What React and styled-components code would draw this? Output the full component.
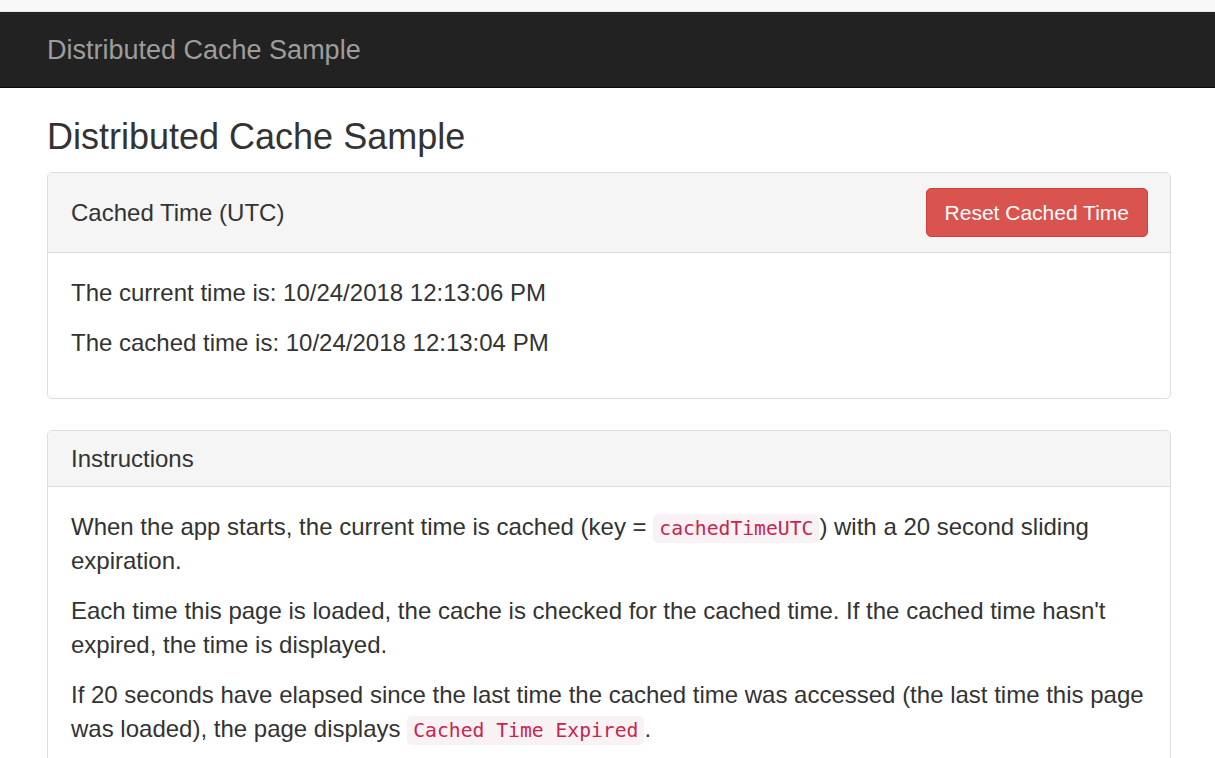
import React from 'react';
import styled, { createGlobalStyle } from 'styled-components';

const GlobalStyle = createGlobalStyle`
  html, body {
    margin: 0;
    padding: 0;
    background: #fff;
  }
  body {
    font-family: "Liberation Sans", Arial, sans-serif;
    color: #333;
  }
`;

const TopStrip = styled.div`
  height: 11px;
  background: #f8f8f8;
  border-bottom: 1px solid #e7e7e7;
`;

const Navbar = styled.nav`
  height: 75px;
  background: #222;
  border-bottom: 1px solid #080808;
  display: flex;
  align-items: center;
  padding-left: 47px;
`;

const Brand = styled.a`
  color: #9d9d9d;
  font-size: 27px;
  text-decoration: none;
  padding-top: 2px;
`;

const Container = styled.main`
  padding: 0 44px 0 47px;
`;

const Title = styled.h1`
  font-size: 36px;
  font-weight: 500;
  line-height: 40px;
  margin: 29px 0 15px;
`;

const Panel = styled.section`
  border: 1px solid #ddd;
  border-radius: 5px;
  margin-bottom: 31px;
  overflow: hidden;
`;

const PanelHeading = styled.div`
  background: #f5f5f5;
  border-bottom: 1px solid #ddd;
  padding: 15px 22px 15px 23px;
  min-height: 25px;
  display: flex;
  align-items: center;
  justify-content: space-between;
  font-size: 24px;
  line-height: 24px;
`;

const PanelBody = styled.div`
  padding: 23px 23px 22px;
  font-size: 24px;
  line-height: 34px;

  p {
    margin: 0 0 16px;
  }
`;

const DangerButton = styled.button`
  font-family: inherit;
  font-size: 21px;
  color: #fff;
  background: #d9534f;
  border: 1px solid #d43f3a;
  border-radius: 5px;
  height: 49px;
  padding: 0 18px;
  cursor: pointer;
`;

const Code = styled.code`
  font-family: "DejaVu Sans Mono", "Liberation Mono", monospace;
  font-size: 19.7px;
  line-height: 16px;
  color: #c7254e;
  background: #f9f2f4;
  border-radius: 5px;
  padding: 3px 6px;
`;

export default function App() {
  return (
    <>
      <GlobalStyle />
      <TopStrip />
      <Navbar>
        <Brand href="#">Distributed Cache Sample</Brand>
      </Navbar>
      <Container>
        <Title>Distributed Cache Sample</Title>

        <Panel>
          <PanelHeading>
            <span>Cached Time (UTC)</span>
            <DangerButton type="button">Reset Cached Time</DangerButton>
          </PanelHeading>
          <PanelBody>
            <p>The current time is: 10/24/2018 12:13:06 PM</p>
            <p>The cached time is: 10/24/2018 12:13:04 PM</p>
          </PanelBody>
        </Panel>

        <Panel>
          <PanelHeading>Instructions</PanelHeading>
          <PanelBody>
            <p>
              When the app starts, the current time is cached (key = <Code>cachedTimeUTC</Code>) with a 20 second
              sliding expiration.
            </p>
            <p>
              Each time this page is loaded, the cache is checked for the cached time. If the cached time hasn't
              expired, the time is displayed.
            </p>
            <p>
              If 20 seconds have elapsed since the last time the cached time was accessed (the last time this page
              was loaded), the page displays <Code>Cached Time Expired</Code>.
            </p>
          </PanelBody>
        </Panel>
      </Container>
    </>
  );
}
